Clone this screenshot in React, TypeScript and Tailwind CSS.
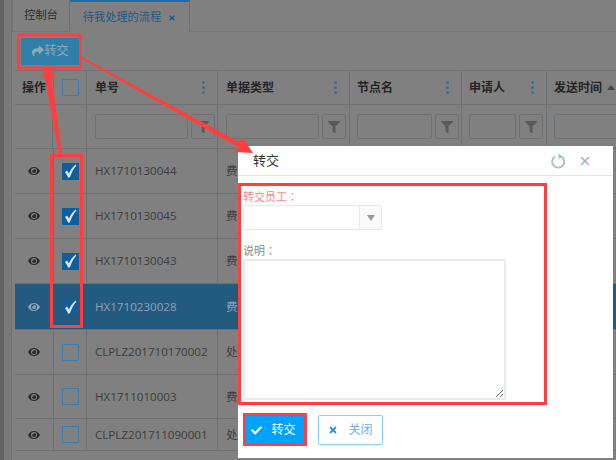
import { FaCheck, FaEye, FaFilter, FaShare, FaTimes } from 'react-icons/fa'
import { X } from 'lucide-react'

const FONT = "font-['Open_Sans','Noto_Sans_CJK_SC',sans-serif]"

const COLS = 'grid grid-cols-[38px_34px_131px_132px_112px_85px_80px]'

const HEADERS = [
  { label: '单号', pad: 'pl-[8px]' },
  { label: '单据类型', pad: 'pl-[8px]' },
  { label: '节点名', pad: 'pl-[7px]' },
  { label: '申请人', pad: 'pl-[7px]' },
]

const ROWS = [
  { no: 'HX1710130044', type: '费', checked: true, h: 'h-[45px]' },
  { no: 'HX1710130045', type: '费', checked: true, h: 'h-[45px]' },
  { no: 'HX1710130043', type: '费', checked: true, h: 'h-[45px]' },
  { no: 'HX1710230028', type: '费', checked: true, selected: true, h: 'h-[46px]' },
  { no: 'CLPLZ201710170002', type: '处', checked: false, h: 'h-[45px]' },
  { no: 'HX1711010003', type: '费', checked: false, h: 'h-[44px]' },
  { no: 'CLPLZ201711090001', type: '处', checked: false, h: 'h-[32px]' },
]

function Dots() {
  return (
    <span className="flex flex-col gap-[2px]">
      <i className="w-[3px] h-[3px] rounded-full bg-[#3f6d8c]" />
      <i className="w-[3px] h-[3px] rounded-full bg-[#3f6d8c]" />
      <i className="w-[3px] h-[3px] rounded-full bg-[#3f6d8c]" />
    </span>
  )
}

function FilterButton() {
  return (
    <div className="w-[24px] h-[25px] rounded-[2px] border border-[#6f7274] flex items-center justify-center">
      <FaFilter size={12} className="text-[#5a5a5a]" />
    </div>
  )
}

function CheckMark() {
  return (
    <svg width="13" height="14" viewBox="0 0 13 14" className="text-[#d7e6f2]">
      <path d="M1 8 L3 6.6 L5 9.4 C6.6 6 8.6 3 11.6 0.6 L12.4 1.4 C9.6 4.6 7.6 8.4 5.8 13.4 L4 13.4 C3.2 11.4 2.2 9.6 1 8 Z" fill="currentColor" />
    </svg>
  )
}

function Box({ checked, selected }: { checked: boolean; selected?: boolean }) {
  if (checked) {
    return (
      <span className={`flex items-center justify-center bg-[#105f9b] ${selected ? 'w-[15px] h-[15px]' : 'w-[17px] h-[17px]'}`}>
        <CheckMark />
      </span>
    )
  }
  return <span className="w-[17px] h-[17px] border border-[#3b7cae] rounded-[1px]" />
}

function RefreshIcon() {
  return (
    <svg width="15" height="16" viewBox="0 0 15 16" fill="none" className="text-[#a9bcd3]">
      <path d="M4 3.6 A6 6 0 1 0 10 3.4" stroke="currentColor" strokeWidth="1.8" />
      <path d="M7.4 0.4 L11.6 3.4 L7.6 6 Z" fill="currentColor" />
    </svg>
  )
}

function Modal() {
  return (
    <div className="absolute left-[238px] top-[146px] w-[375px] h-[312px] bg-white flex flex-col">
      <div className="h-[30px] flex items-center justify-between pl-[15px] pr-[21px] border-b border-[#e5e5e5] text-[13px] text-[#333]">
        <span>转交</span>
        <span className="flex items-center gap-[12px] text-[#9db2cc]">
          <RefreshIcon />
          <X size={14} strokeWidth={2.8} />
        </span>
      </div>
      <div className="pl-[5px] pt-[12px] flex flex-col text-[11px]">
        <label className="text-[#ff7f86] h-[17px]">
          转交员工<span className="font-['Noto_Sans_CJK_TC']">：</span>
        </label>
        <div className="w-[139px] h-[25px] flex rounded-[2px] border border-[#e3e8ef]">
          <div className="flex-1" />
          <div className="w-[22px] border-l border-[#e3e8ef] bg-[#fafafa] flex items-center justify-center">
            <span className="w-0 h-0 border-x-[4px] border-x-transparent border-t-[6px] border-t-[#999]" />
          </div>
        </div>
        <label className="mt-[12px] text-[#888] h-[15px]">
          说明<span className="font-['Noto_Sans_CJK_TC']">：</span>
        </label>
        <textarea readOnly className="mt-[2px] w-[263px] h-[141px] border-2 border-[#e6ebf1] rounded-[2px]" />
      </div>
      <div className="mt-[15px] pl-[5px] flex gap-[11px] text-[12px]">
        <button className="w-[64px] h-[30px] rounded-[2px] bg-[#00a2ff] text-white flex items-center justify-center gap-[9px] pr-[3px]">
          <FaCheck size={11} />
          转交
        </button>
        <button className="w-[65px] h-[30px] border border-[#80cfff] rounded-[2px] text-[#6aaef0] flex items-center justify-center gap-[10px]">
          <FaTimes size={10} className="text-[#1b8fe6]" />
          关闭
        </button>
      </div>
    </div>
  )
}

function Annotations() {
  return (
    <svg className="absolute inset-0 pointer-events-none" width="616" height="460" viewBox="0 0 616 460">
      <g fill="none" stroke="#ff3f3f" strokeWidth="3">
        <rect x="18.5" y="35" width="62" height="33" />
        <rect x="51.5" y="155.5" width="30" height="171" />
        <rect x="239.5" y="184.5" width="306" height="219" />
        <rect x="244.5" y="414.5" width="61" height="30" />
      </g>
      <g fill="#ff3f3f">
        {/* thin tail by the check column, head at the toolbar button */}
        <polygon points="47,64 56,78 52,78 62,155 59,155 45,78 42,78" />
        {/* thin tail by the button, head at the dialog */}
        <polygon points="82,57 239,142 243,138 253,153 235,152 238,147 82,59" />
      </g>
    </svg>
  )
}

export default function App() {
  return (
    <div className={`relative w-[616px] h-[460px] overflow-hidden bg-[#808080] flex ${FONT}`}>
      <div className="w-[4px] bg-[#626262]" />
      <div className="w-[8px] bg-[#7a7a7a] border-r border-[#6f7274]" />
      <div className="w-[3px]" />
      <main className="flex-1 flex flex-col min-w-0 text-[#333]">
        <div className="h-[32px] flex border-b border-[#6c7883] text-[11.2px] -ml-[3px]">
          <div className="w-[58px] flex items-center justify-center border-x border-[#6f7274] text-[#2e2e2e]">控制台</div>
          <div className="w-[120px] flex items-center justify-center gap-[7px] border-t-2 border-t-[#1b6ea8] border-r border-[#6f7274] text-[#1e5a87] h-[33px] bg-[#808080]">
            待我处理的流程
            <FaTimes size={8} className="text-[#1e5a87]" />
          </div>
        </div>
        <div className="h-[39px] flex items-center pl-[6px] border-b border-[#6f7274]">
          <button className="w-[59px] h-[27px] bg-[#2f7fa8] text-[#8fa9b8] text-[12px] flex items-center justify-center">
            <FaShare size={12} />
            转交
          </button>
        </div>
        <div className={`${COLS} h-[34px] border-b border-[#6f7274] text-[12px] font-semibold text-[#262626]`}>
          <div className="flex items-center pl-[7px] whitespace-nowrap overflow-hidden">操作</div>
          <div className="flex items-center justify-center border-x border-[#6f7274]">
            <Box checked={false} />
          </div>
          {HEADERS.map((h) => (
            <div key={h.label} className={`flex items-center justify-between ${h.pad} pr-[12px] border-r border-[#6f7274]`}>
              {h.label}
              <Dots />
            </div>
          ))}
          <div className="flex items-center gap-[5px] pl-[7px] whitespace-nowrap">
            发送时间
            <span className="w-0 h-0 border-x-[4px] border-x-transparent border-b-[5px] border-b-[#444]" />
          </div>
        </div>
        <div className={`${COLS} h-[44px] border-b border-[#6f7274]`}>
          <div className="border-r border-[#6f7274]" />
          <div className="border-r border-[#6f7274]" />
          {['w-[93px]', 'w-[93px]', 'w-[75px]', 'w-[47px]'].map((w, i) => (
            <div key={i} className={`flex items-center gap-[3px] border-r border-[#6f7274] ${i < 2 ? 'pl-[8px]' : 'pl-[7px]'}`}>
              <div className={`h-[25px] ${w} rounded-[2px] border border-[#6f7274]`} />
              <FilterButton />
            </div>
          ))}
          <div className="flex items-center pl-[7px]">
            <div className="h-[25px] w-[70px] rounded-[2px] border border-[#6f7274]" />
          </div>
        </div>
        {ROWS.map((r) => (
          <div
            key={r.no}
            className={`${COLS} ${r.h} shrink-0 border-b border-[#6f7274] text-[11.6px] ${r.selected ? 'bg-[#235a80] text-[#8ea3b2]' : 'text-[#3d3d3d]'}`}
          >
            <div className="flex items-center justify-center">
              <FaEye size={12} className={r.selected ? 'text-[#8ea3b2]' : 'text-[#2b2b2b]'} />
            </div>
            <div className={`flex items-center justify-center ${r.selected ? '' : 'border-x border-[#6f7274]'}`}>
              <Box checked={r.checked} selected={r.selected} />
            </div>
            <div className={`flex items-center pl-[8px] ${r.selected ? '' : 'border-r border-[#6f7274]'}`}>{r.no}</div>
            <div className="flex items-center pl-[8px]">{r.type}</div>
          </div>
        ))}
      </main>
      <Modal />
      <Annotations />
    </div>
  )
}
